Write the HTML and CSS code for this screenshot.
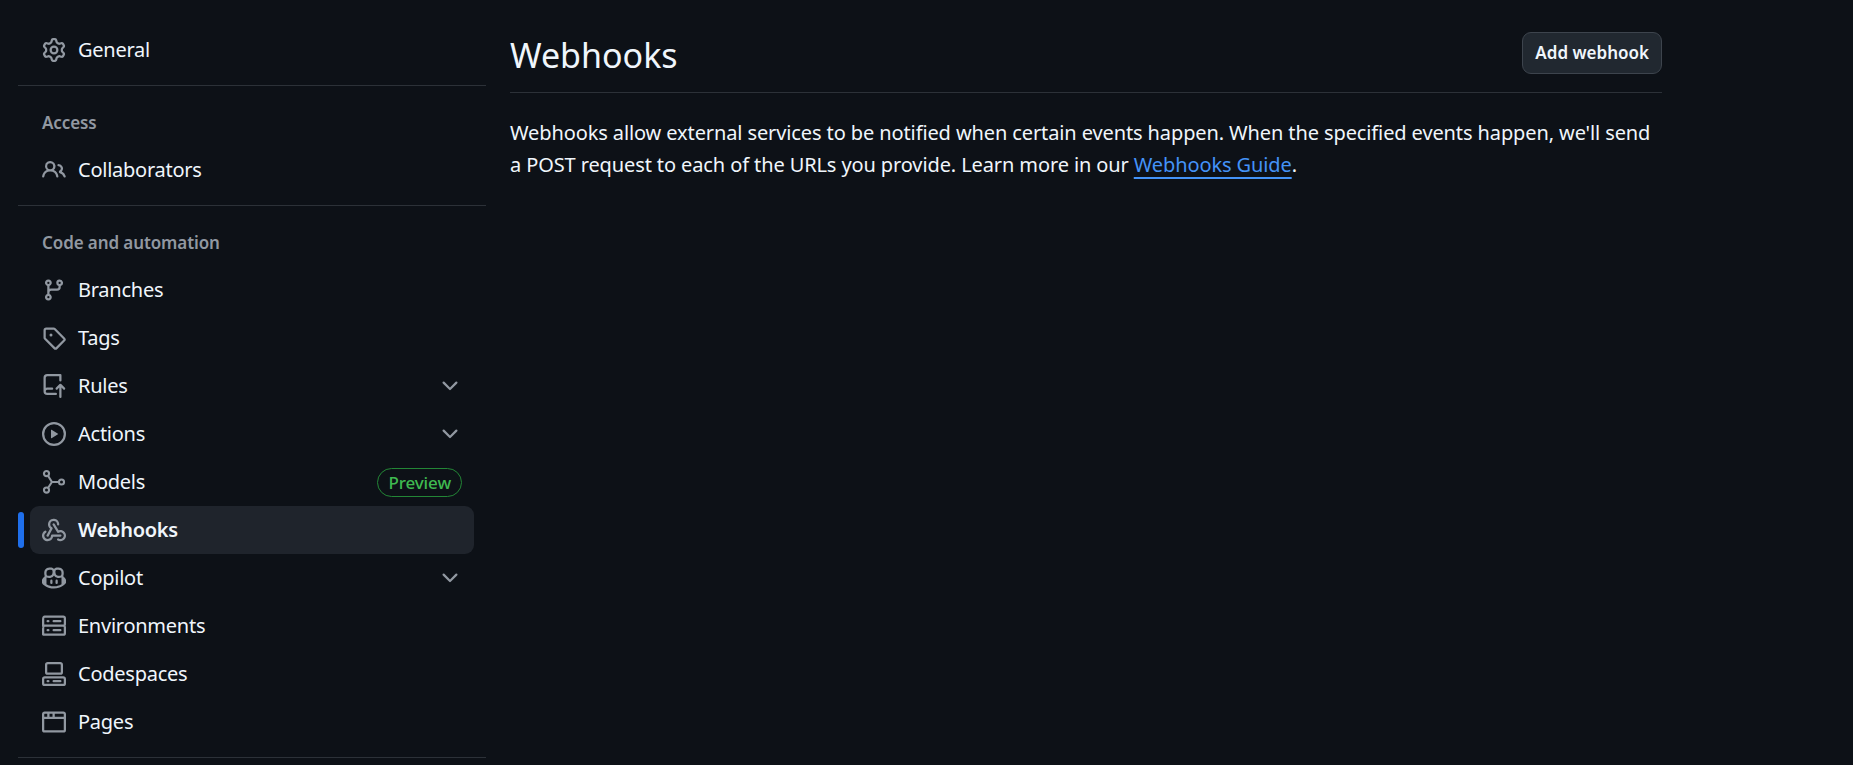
FILE: index.html
```html
<!DOCTYPE html>
<html lang="en">
<head>
<meta charset="utf-8">
<title>Webhooks</title>
<link rel="stylesheet" href="styles.css">
</head>
<body>
<div class="page">
  <nav class="side">
    <ul class="list">
      <li class="row"><svg class="ico" viewBox="0 0 16 16"><path d="M8 0a8.2 8.2 0 0 1 .701.031C9.444.095 9.99.645 10.16 1.29l.288 1.107c.018.066.079.158.212.224.231.114.454.243.668.386.123.082.233.09.299.071l1.103-.303c.644-.176 1.392.021 1.82.63.27.385.506.792.704 1.218.315.675.111 1.422-.364 1.891l-.814.806c-.049.048-.098.147-.088.294.016.257.016.515 0 .772-.01.147.038.246.088.294l.814.806c.475.469.679 1.216.364 1.891a7.977 7.977 0 0 1-.704 1.217c-.428.61-1.176.807-1.82.63l-1.102-.302c-.067-.019-.177-.011-.3.071a5.909 5.909 0 0 1-.668.386c-.133.066-.194.158-.211.224l-.29 1.106c-.168.646-.715 1.196-1.458 1.26a8.006 8.006 0 0 1-1.402 0c-.743-.064-1.289-.614-1.458-1.26l-.289-1.106c-.018-.066-.079-.158-.212-.224a5.738 5.738 0 0 1-.668-.386c-.123-.082-.233-.09-.299-.071l-1.103.303c-.644.176-1.392-.021-1.82-.63a8.12 8.12 0 0 1-.704-1.218c-.315-.675-.111-1.422.363-1.891l.815-.806c.05-.048.098-.147.088-.294a6.214 6.214 0 0 1 0-.772c.01-.147-.038-.246-.088-.294l-.815-.806C.635 6.045.431 5.298.746 4.623a7.92 7.92 0 0 1 .704-1.217c.428-.61 1.176-.807 1.82-.63l1.102.302c.067.019.177.011.3-.071.214-.143.437-.272.668-.386.133-.066.194-.158.211-.224l.29-1.106C6.009.645 6.556.095 7.299.03 7.53.01 7.764 0 8 0Zm-.571 1.525c-.036.003-.108.036-.137.146l-.289 1.105c-.147.561-.549.967-.998 1.189-.173.086-.34.183-.5.29-.417.278-.97.423-1.529.27l-1.103-.303c-.109-.03-.175.016-.195.045-.22.312-.412.644-.573.99-.014.031-.021.11.059.19l.815.806c.411.406.562.957.53 1.456a4.709 4.709 0 0 0 0 .582c.032.499-.119 1.05-.53 1.456l-.815.806c-.081.08-.073.159-.059.19.162.346.353.677.573.989.02.03.085.076.195.046l1.102-.303c.56-.153 1.113-.008 1.53.27.161.107.328.204.501.29.447.222.85.629.997 1.189l.289 1.105c.029.109.101.143.137.146a6.6 6.6 0 0 0 1.142 0c.036-.003.108-.036.137-.146l.289-1.105c.147-.561.549-.967.998-1.189.173-.086.34-.183.5-.29.417-.278.97-.423 1.529-.27l1.103.303c.109.029.175-.016.195-.045.22-.313.411-.644.573-.99.014-.031.021-.11-.059-.19l-.815-.806c-.411-.406-.562-.957-.53-1.456a4.709 4.709 0 0 0 0-.582c-.032-.499.119-1.05.53-1.456l.815-.806c.081-.08.073-.159.059-.19a6.464 6.464 0 0 0-.573-.989c-.02-.03-.085-.076-.195-.046l-1.102.303c-.56.153-1.113.008-1.53-.27a4.44 4.44 0 0 0-.501-.29c-.447-.222-.85-.629-.997-1.189l-.289-1.105c-.029-.11-.101-.143-.137-.146a6.6 6.6 0 0 0-1.142 0ZM11 8a3 3 0 1 1-6 0 3 3 0 0 1 6 0ZM9.5 8a1.5 1.5 0 1 0-3.001.001A1.5 1.5 0 0 0 9.5 8Z"/></svg><span class="label">General</span></li>
    </ul>
    <div class="rule"></div>
    <h2 class="head">Access</h2>
    <ul class="list">
      <li class="row"><svg class="ico" viewBox="0 0 16 16"><path d="M2 5.5a3.5 3.5 0 1 1 5.898 2.549 5.508 5.508 0 0 1 3.034 4.084.75.75 0 1 1-1.482.235 4 4 0 0 0-7.9 0 .75.75 0 0 1-1.482-.236A5.507 5.507 0 0 1 3.102 8.05 3.493 3.493 0 0 1 2 5.5ZM11 4a3.001 3.001 0 0 1 2.22 5.018 5.01 5.01 0 0 1 2.56 3.012.749.749 0 0 1-.885.954.752.752 0 0 1-.549-.514 3.507 3.507 0 0 0-2.522-2.372.75.75 0 0 1-.574-.73v-.352a.75.75 0 0 1 .416-.672A1.5 1.5 0 0 0 11 5.5.75.75 0 0 1 11 4Zm-5.5-.5a2 2 0 1 0-.001 3.999A2 2 0 0 0 5.5 3.5Z"/></svg><span class="label">Collaborators</span></li>
    </ul>
    <div class="rule"></div>
    <h2 class="head">Code and automation</h2>
    <ul class="list">
      <li class="row"><svg class="ico" viewBox="0 0 16 16"><path d="M9.5 3.25a2.25 2.25 0 1 1 3 2.122V6A2.5 2.5 0 0 1 10 8.5H6a1 1 0 0 0-1 1v1.128a2.251 2.251 0 1 1-1.5 0V5.372a2.25 2.25 0 1 1 1.5 0v1.836A2.493 2.493 0 0 1 6 7h4a1 1 0 0 0 1-1v-.628A2.25 2.25 0 0 1 9.5 3.25Zm-6 0a.75.75 0 1 0 1.5 0 .75.75 0 0 0-1.5 0Zm8.25-.75a.75.75 0 1 0 0 1.5.75.75 0 0 0 0-1.5ZM4.25 12a.75.75 0 1 0 0 1.5.75.75 0 0 0 0-1.5Z"/></svg><span class="label">Branches</span></li>
      <li class="row"><svg class="ico" viewBox="0 0 16 16"><path d="M1 7.775V2.75C1 1.784 1.784 1 2.75 1h5.025c.464 0 .91.184 1.238.513l6.25 6.25a1.75 1.75 0 0 1 0 2.474l-5.026 5.026a1.75 1.75 0 0 1-2.474 0l-6.25-6.25A1.752 1.752 0 0 1 1 7.775Zm1.5 0c0 .066.026.13.073.177l6.25 6.25a.25.25 0 0 0 .354 0l5.025-5.025a.25.25 0 0 0 0-.354l-6.25-6.25a.25.25 0 0 0-.177-.073H2.75a.25.25 0 0 0-.25.25ZM6 5a1 1 0 1 1 0 2 1 1 0 0 1 0-2Z"/></svg><span class="label">Tags</span></li>
      <li class="row"><svg class="ico" viewBox="0 0 16 16"><path d="M1 2.5A2.5 2.5 0 0 1 3.5 0h8.75a.75.75 0 0 1 .75.75v3.5a.75.75 0 0 1-1.5 0V1.5h-8a1 1 0 0 0-1 1v6.708A2.492 2.492 0 0 1 3.5 9h3.25a.75.75 0 0 1 0 1.5H3.5a1 1 0 0 0 0 2h5.75a.75.75 0 0 1 0 1.5H3.5A2.5 2.5 0 0 1 1 11.5Zm13.23 7.79h-.001l-1.224-1.224v6.184a.75.75 0 0 1-1.5 0V9.066L10.28 10.29a.75.75 0 0 1-1.06-1.061l2.505-2.504a.75.75 0 0 1 1.06 0L15.29 9.23a.751.751 0 0 1-.018 1.042.751.751 0 0 1-1.042.018Z"/></svg><span class="label">Rules</span><svg class="ico chev" viewBox="0 0 16 16"><path d="M12.78 5.22a.749.749 0 0 1 0 1.06l-4.25 4.25a.749.749 0 0 1-1.06 0L3.22 6.28a.749.749 0 1 1 1.06-1.06L8 8.939l3.72-3.719a.749.749 0 0 1 1.06 0Z"/></svg></li>
      <li class="row"><svg class="ico" viewBox="0 0 16 16"><path d="M8 0a8 8 0 1 1 0 16A8 8 0 0 1 8 0ZM1.5 8a6.5 6.5 0 1 0 13 0 6.5 6.5 0 0 0-13 0Zm4.879-2.773 4.264 2.559a.25.25 0 0 1 0 .428l-4.264 2.559A.25.25 0 0 1 6 10.559V5.442a.25.25 0 0 1 .379-.215Z"/></svg><span class="label">Actions</span><svg class="ico chev" viewBox="0 0 16 16"><path d="M12.78 5.22a.749.749 0 0 1 0 1.06l-4.25 4.25a.749.749 0 0 1-1.06 0L3.22 6.28a.749.749 0 1 1 1.06-1.06L8 8.939l3.72-3.719a.749.749 0 0 1 1.06 0Z"/></svg></li>
      <li class="row"><svg class="ico" viewBox="0 0 16 16"><g class="lines"><circle cx="3" cy="2.4" r="1.7"/><circle cx="3" cy="13.4" r="1.7"/><circle cx="13" cy="8" r="1.7"/><path d="M4 3.8 6.6 8 4 12M6.6 8h4.7"/></g></svg><span class="label">Models</span><span class="pill">Preview</span></li>
      <li class="row active"><svg class="ico" viewBox="0 0 16 16"><path d="M5.5 4.25a2.25 2.25 0 0 1 4.5 0 .75.75 0 0 0 1.5 0 3.75 3.75 0 1 0-6.14 2.889l-2.272 4.258a.75.75 0 0 0 1.324.706L7 7.25a.75.75 0 0 0-.309-1.015A2.25 2.25 0 0 1 5.5 4.25Z"/><path d="M7.364 3.607a.75.75 0 0 1 1.03.257l2.608 4.349a3.75 3.75 0 1 1-.628 6.785.75.75 0 0 1 .752-1.299 2.25 2.25 0 1 0-.033-3.88.75.75 0 0 1-1.03-.256L7.107 4.636a.75.75 0 0 1 .257-1.03Z"/><path d="M2.9 8.776A.75.75 0 0 1 2.625 9.8 2.25 2.25 0 1 0 6 11.75a.75.75 0 0 1 .75-.751h5.5a.75.75 0 0 1 0 1.5H7.425a3.751 3.751 0 1 1-5.55-3.998.75.75 0 0 1 1.024.274Z"/></svg><span class="label">Webhooks</span></li>
      <li class="row"><svg class="ico" viewBox="0 0 16 16"><path d="M7.998 15.035c-4.562 0-7.873-2.914-7.998-3.749V9.338c.085-.628.677-1.686 1.588-2.065.013-.07.024-.143.036-.218.029-.183.06-.384.126-.612-.201-.508-.254-1.084-.254-1.656 0-.87.128-1.769.693-2.484.579-.733 1.494-1.124 2.724-1.261 1.206-.134 2.262.034 2.944.765.05.053.096.108.139.165.044-.057.094-.112.143-.165.682-.731 1.738-.899 2.944-.765 1.23.137 2.145.528 2.724 1.261.566.715.693 1.614.693 2.484 0 .572-.053 1.148-.254 1.656.066.228.098.429.126.612.012.076.024.148.037.218.924.385 1.522 1.471 1.591 2.095v1.872c0 .766-3.351 3.795-8.002 3.795Zm0-1.485c2.28 0 4.584-1.11 5.002-1.433V7.862l-.023-.116c-.49.21-1.075.291-1.727.291-1.146 0-2.059-.327-2.71-.991A3.222 3.222 0 0 1 8 6.303a3.24 3.24 0 0 1-.544.743c-.65.664-1.563.991-2.71.991-.652 0-1.236-.081-1.727-.291l-.023.116v4.255c.419.323 2.722 1.433 5.002 1.433ZM6.762 2.83c-.193-.206-.637-.413-1.682-.297-1.019.113-1.479.404-1.713.7-.247.312-.369.789-.369 1.554 0 .793.129 1.171.308 1.371.162.181.519.379 1.442.379.853 0 1.339-.235 1.638-.54.315-.322.527-.827.617-1.553.117-.935-.037-1.395-.241-1.614Zm4.155-.297c-1.044-.116-1.488.091-1.681.297-.204.219-.359.679-.242 1.614.091.726.303 1.231.618 1.553.299.305.784.54 1.638.54.922 0 1.28-.198 1.442-.379.179-.2.308-.578.308-1.371 0-.765-.123-1.242-.37-1.554-.233-.296-.693-.587-1.713-.7Z"/><path d="M6.25 9.037a.75.75 0 0 1 .75.75v1.501a.75.75 0 0 1-1.5 0V9.787a.75.75 0 0 1 .75-.75Zm4.25.75v1.501a.75.75 0 0 1-1.5 0V9.787a.75.75 0 0 1 1.5 0Z"/></svg><span class="label">Copilot</span><svg class="ico chev" viewBox="0 0 16 16"><path d="M12.78 5.22a.749.749 0 0 1 0 1.06l-4.25 4.25a.749.749 0 0 1-1.06 0L3.22 6.28a.749.749 0 1 1 1.06-1.06L8 8.939l3.72-3.719a.749.749 0 0 1 1.06 0Z"/></svg></li>
      <li class="row"><svg class="ico" viewBox="0 0 16 16"><path d="M1.75 1h12.5c.966 0 1.75.784 1.75 1.75v4c0 .372-.116.717-.314 1 .198.283.314.628.314 1v4a1.75 1.75 0 0 1-1.75 1.75H1.75A1.75 1.75 0 0 1 0 13.75v-4c0-.372.116-.717.314-1a1.739 1.739 0 0 1-.314-1v-4C0 1.784.784 1 1.75 1ZM1.5 2.75v4c0 .138.112.25.25.25h12.5a.25.25 0 0 0 .25-.25v-4a.25.25 0 0 0-.25-.25H1.75a.25.25 0 0 0-.25.25Zm.25 5.75a.25.25 0 0 0-.25.25v4c0 .138.112.25.25.25h12.5a.25.25 0 0 0 .25-.25v-4a.25.25 0 0 0-.25-.25ZM7 4.75A.75.75 0 0 1 7.75 4h4.5a.75.75 0 0 1 0 1.5h-4.5A.75.75 0 0 1 7 4.75ZM7.75 10h4.5a.75.75 0 0 1 0 1.5h-4.5a.75.75 0 0 1 0-1.5ZM3 4.75A.75.75 0 0 1 3.75 4h.5a.75.75 0 0 1 0 1.5h-.5A.75.75 0 0 1 3 4.75ZM3.75 10h.5a.75.75 0 0 1 0 1.5h-.5a.75.75 0 0 1 0-1.5Z"/></svg><span class="label">Environments</span></li>
      <li class="row"><svg class="ico" viewBox="0 0 16 16"><path d="M0 11.25c0-.966.784-1.75 1.75-1.75h12.5c.966 0 1.75.784 1.75 1.75v3A1.75 1.75 0 0 1 14.25 16H1.75A1.75 1.75 0 0 1 0 14.25Zm2-9.5C2 .784 2.784 0 3.75 0h8.5C13.216 0 14 .784 14 1.75v5a1.75 1.75 0 0 1-1.75 1.75h-8.5A1.75 1.75 0 0 1 2 6.75Zm1.75-.25a.25.25 0 0 0-.25.25v5c0 .138.112.25.25.25h8.5a.25.25 0 0 0 .25-.25v-5a.25.25 0 0 0-.25-.25Zm-2 9.5a.25.25 0 0 0-.25.25v3c0 .138.112.25.25.25h12.5a.25.25 0 0 0 .25-.25v-3a.25.25 0 0 0-.25-.25Z"/><path d="M7 12.75a.75.75 0 0 1 .75-.75h4.5a.75.75 0 0 1 0 1.5h-4.5a.75.75 0 0 1-.75-.75Zm-4 0a.75.75 0 0 1 .75-.75h.5a.75.75 0 0 1 0 1.5h-.5a.75.75 0 0 1-.75-.75Z"/></svg><span class="label">Codespaces</span></li>
      <li class="row"><svg class="ico" viewBox="0 0 16 16"><path d="M0 2.75C0 1.784.784 1 1.75 1h12.5c.966 0 1.75.784 1.75 1.75v10.5A1.75 1.75 0 0 1 14.25 15H1.75A1.75 1.75 0 0 1 0 13.25ZM14.5 6h-13v7.25c0 .138.112.25.25.25h12.5a.25.25 0 0 0 .25-.25Zm-6-3.5v2h6v-1.75a.25.25 0 0 0-.25-.25ZM5 2.5v2h2v-2Zm-3.25 0a.25.25 0 0 0-.25.25V4.5h2v-2Z"/></svg><span class="label">Pages</span></li>
    </ul>
    <div class="rule"></div>
  </nav>
  <main class="main">
    <header class="subhead">
      <h1 class="title">Webhooks</h1>
      <a class="btn">Add webhook</a>
    </header>
    <p class="intro">Webhooks allow external services to be notified when certain events happen. When the specified events happen, we'll send a POST request to each of the URLs you provide. Learn more in our <a class="link">Webhooks Guide</a>.</p>
  </main>
</div>
</body>
</html>
```
FILE: styles.css
```css
* { box-sizing: border-box; }
html, body { height: 100%; }
body {
  margin: 0;
  background: #0d1117;
  color: #f0f6fc;
  font-family: "Noto Sans", "Open Sans", sans-serif;
  font-size: 20px;
  overflow: hidden;
}
.page { display: flex; align-items: flex-start; padding-left: 18px; height: 765px; overflow: hidden; }
.side { width: 468px; flex: none; padding-top: 26px; }
.list { list-style: none; margin: 0; padding: 0 12px; }
.row {
  position: relative;
  display: flex;
  align-items: center;
  gap: 12px;
  height: 48px;
  padding: 0 12px;
  border-radius: 9px;
}
.ico { width: 24px; height: 24px; flex: none; fill: #9198a1; }
.lines { fill: none; stroke: #9198a1; stroke-width: 1.4; }
.label { flex: 1; line-height: 48px; letter-spacing: -0.25px; }
.chev { margin-left: auto; }
.active { background: #1f242c; }
.active .label { font-weight: 600; }
.active::before {
  content: "";
  position: absolute;
  left: -12px;
  top: 6px;
  bottom: 6px;
  width: 6px;
  border-radius: 3px;
  background: #1f6feb;
}
.rule { height: 1px; margin-top: 11px; background: #2c3138; }
.head {
  margin: 25px 0 11px;
  padding-left: 24px;
  height: 24px;
  line-height: 24px;
  font-size: 17px;
  font-weight: 600;
  letter-spacing: -0.1px;
  color: #9198a1;
}
.pill {
  height: 29px;
  padding: 0 10px;
  border: 1px solid #238636;
  border-radius: 15px;
  color: #3fb950;
  font-size: 17px;
  font-weight: 500;
  letter-spacing: -0.1px;
  line-height: 27px;
}
.main { width: 1152px; margin-left: 24px; padding-top: 32px; }
.subhead {
  display: flex;
  justify-content: space-between;
  align-items: flex-start;
  height: 61px;
  border-bottom: 1px solid #2c3138;
}
.title { margin: 0; font-size: 34px; font-weight: 400; line-height: 46px; }
.btn {
  display: block;
  height: 42px;
  padding: 0 12px;
  border: 1px solid #3d444d;
  border-radius: 9px;
  background: #212830;
  font-size: 17px;
  font-weight: 600;
  line-height: 40px;
}
.intro { margin: 24px 0 0; line-height: 32px; letter-spacing: -0.11px; }
.link { color: #4493f8; text-decoration: underline; text-decoration-thickness: 1.5px; text-underline-offset: 5px; }
```
